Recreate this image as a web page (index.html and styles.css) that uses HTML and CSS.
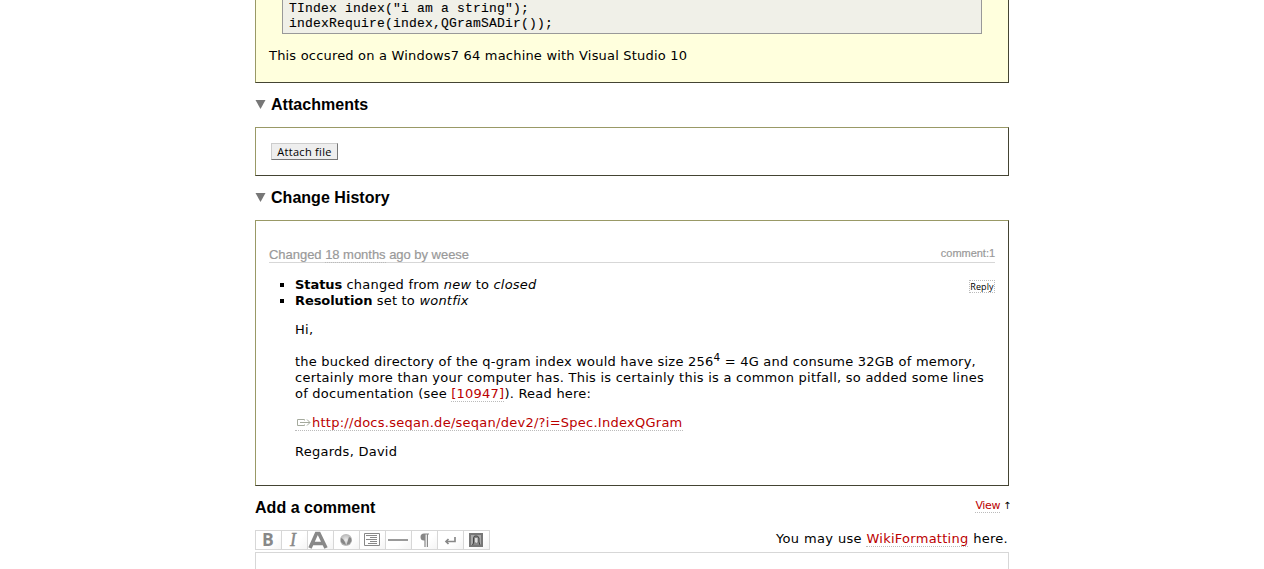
FILE: index.html
```html
<!DOCTYPE html>
<html lang="en">
<head>
<meta charset="utf-8">
<title>Ticket</title>
<link rel="stylesheet" href="styles.css">
</head>
<body>
<main class="content">
  <section class="box ticket">
    <pre class="code">TIndex index("i am a string");
indexRequire(index,QGramSADir());</pre>
    <p class="note">This occured on a Windows7 64 machine with Visual Studio 10</p>
  </section>
  <h2 class="heading"><svg class="arrow" viewBox="0 0 10 9"><path d="M0 0h10L5 9z"/></svg>Attachments</h2>
  <section class="box attachments"><button class="attach">Attach file</button></section>
  <h2 class="heading"><svg class="arrow" viewBox="0 0 10 9"><path d="M0 0h10L5 9z"/></svg>Change History</h2>
  <section class="box history">
    <h3 class="change"><span>Changed <span class="time">18 months</span> ago by weese</span><span class="number">comment:1</span></h3>
    <div class="change-body">
      <ul class="changes">
        <li><strong>Status</strong> changed from <em>new</em> to <em>closed</em></li>
        <li><strong>Resolution</strong> set to <em>wontfix</em></li>
      </ul>
      <button class="reply">Reply</button>
    </div>
    <div class="comment">
      <p>Hi,</p>
      <p class="long"><span class="l1">the bucked directory of the q-gram index would have size 256<sup>4</sup> = 4G and consume 32GB of memory,</span><br><span class="l2">certainly more than your computer has. This is certainly this is a common pitfall, so added some lines</span><br><span class="l3">of documentation (see <a>[10947]</a>). Read here:</span></p>
      <p><a class="url"><svg class="ext" viewBox="0 0 14 8"><path d="M7.500 1.500V.5H.5v6h7v-1M3 3.500h10M10 .5l3 3-3 3"/></svg>http://docs.seqan.de/seqan/dev2/?i=Spec.IndexQGram</a></p>
      <p>Regards, David</p>
    </div>
  </section>
  <div class="heading add"><h2>Add a comment</h2><span class="view"><a>View</a><span>↑</span></span></div>
  <div class="edit-head">
    <div class="toolbar">
      <span><svg viewBox="0 0 25 18"><text class="bold" x="6" y="15">B</text></svg></span>
      <span><svg viewBox="0 0 25 18"><text class="italic" x="8" y="15">I</text></svg></span>
      <span><svg viewBox="0 0 25 18"><path class="letter" d="M2 17L8.500 2.500h2.500L18 17M5 12.500h10"/></svg></span>
      <span><svg viewBox="0 0 25 18"><defs><radialGradient id="g"><stop offset="0" stop-color="#eee"/><stop offset="1" stop-color="#b5b5b5"/></radialGradient></defs><circle cx="12" cy="9" r="6" fill="url(#g)"/><path class="land" d="M7 7l2 1 2 3 1 3-3-1-2-2zM14 9l1-3 2 1 .5 3-2 3-3 1z"/></svg></span>
      <span><svg viewBox="0 0 25 18"><path class="line" d="M4.500 2.500h15v12h-15zM6 4.500h11M10 6.500h7M6 8.500h11M10 10.500h7M8 12.500h9"/></svg></span>
      <span><svg viewBox="0 0 25 18"><path class="rule" d="M2 9h20"/></svg></span>
      <span><svg viewBox="0 0 25 18"><path class="fill" d="M17 2.500H12a3.300 3.300 0 0 0 0 7h.4V16h1.200V3.500h1.200V16H16V3.500h1z"/></svg></span>
      <span><svg viewBox="0 0 25 18"><path class="return" d="M17 6v4.500H8M10.500 8L8 10.500l2.500 2.500"/></svg></span>
      <span><svg viewBox="0 0 25 18"><path class="frame" d="M6 3h12v12H6z"/><path class="face" d="M8.500 14l1-2V7l1-2h3l1.500 2v4l1 3"/><path class="chin" d="M11 7h2.500v4l-1 1-1.500-1z"/></svg></span>
    </div>
    <div class="help">You may use <a>WikiFormatting</a> here.</div>
  </div>
  <div class="textarea"></div>
</main>
</body>
</html>
```
FILE: styles.css
```css
* { box-sizing: border-box; }
body {
  margin: 0;
  height: 569px;
  overflow: hidden;
  background: #fff;
  color: #000;
  font: 13px/16px "DejaVu Sans", Verdana, sans-serif;
  letter-spacing: .26px;
}
.content { width: 754px; margin-left: 255px; white-space: nowrap; }
.box { border: 1px solid; border-color: #996 #443 #443 #996; }
.ticket { height: 83px; border-top: 0; background: #ffffdd; padding: 0 26px; }
.code {
  margin: 0;
  height: 34px;
  padding: 1px 6px 0;
  border: 1px solid #999;
  border-top: 0;
  background: #f0f0e8;
  font: 13px/15px "Liberation Mono", "Courier New", monospace;
  letter-spacing: .2px;
  -webkit-text-stroke: .1px #000;
}
.note { margin: 14px 0 0 -13px; letter-spacing: .19px; }
p { margin: 0; }
a { color: #b00; border-bottom: 1px dotted #bbb; }
.heading {
  margin: 0;
  height: 44px;
  display: flex;
  align-items: center;
  font: bold 16px/44px "Liberation Sans", Arial, sans-serif;
  letter-spacing: .03px;
}
.arrow { width: 11px; height: 9px; margin: 0 5px 1px 0; fill: #777; }
.attachments { height: 49px; padding: 15px; }
.attach {
  display: block;
  width: 67px;
  height: 17px;
  padding: 0;
  border: 1px solid;
  border-color: #ccc #777 #777 #ccc;
  background: #eee;
  color: #000;
  font: 11px/15px "Open Sans", sans-serif;
  letter-spacing: .3px;
}
.history { height: 266px; padding: 26px 13px 0; }
.change {
  margin: 0;
  height: 16px;
  border-bottom: 1px solid #d7d7d7;
  display: flex;
  justify-content: space-between;
  color: #999;
  font: 13px/16px "Liberation Sans", Arial, sans-serif;
  letter-spacing: -.03px;
  -webkit-text-stroke: .2px #999;
}
.time { border-bottom: 1px dotted #bbb; }
.number { font-size: 11px; line-height: 13px; }
.change-body { display: flex; justify-content: space-between; padding-top: 14px; }
.changes { margin: 0; padding-left: 26px; list-style: square; letter-spacing: .21px; }
.changes strong { letter-spacing: -.07px; }
.reply {
  margin-top: 3px;
  width: 26px;
  height: 13px;
  padding: 0;
  border: 1px dotted #bbb;
  background: #fff;
  font: 9px/11px "Open Sans", sans-serif;
  letter-spacing: .1px;
}
.comment { padding-left: 26px; }
.comment p { margin-top: 13px; }
.comment .long { margin-top: 16px; }
.l1 { letter-spacing: .225px; }
.l2 { letter-spacing: .25px; }
.l3 { letter-spacing: .23px; }
sup { font-size: 10.5px; line-height: 0; }
.ext { width: 14px; height: 8px; margin: 0 1px 0 2px; fill: none; stroke: #a5aa9d; }
.add { justify-content: space-between; }
.add h2 { margin: 0; font: inherit; }
.view { display: flex; margin: 0 0 4px; font: 11px/12px "DejaVu Sans", Verdana, sans-serif; letter-spacing: -.4px; }
.view a { height: 13px; margin-right: 3px; }
.view span { width: 6px; font-size: 10px; }
.edit-head { display: flex; justify-content: space-between; height: 22px; }
.toolbar { display: flex; height: 20px; border: 1px solid #d7d7d7; border-right: 0; }
.toolbar span { width: 26px; border-right: 1px solid #d7d7d7; background: linear-gradient(135deg, #fff 60%, #f4f4f4); }
.toolbar svg { display: block; width: 25px; height: 18px; fill: #888; }
.bold { font: bold 17.5px "Open Sans", sans-serif; }
.italic { font: italic 18px "Liberation Serif", serif; stroke: #888; stroke-width: .4; }
.letter { fill: none; stroke: #888; stroke-width: 3.6; }
.land { fill: #888; }
.line, .frame { fill: none; stroke: #888; }
.rule, .return { fill: none; stroke: #888; stroke-width: 1.7; }
.frame { fill: #aaa; stroke: #777; stroke-width: 2; }
.face { fill: #888; stroke: #444; }
.chin { fill: #ddd; }
.help { padding: 1px 1px 0 0; word-spacing: .4px; }
.textarea { height: 40px; border: 1px solid #d7d7d7; }
```
